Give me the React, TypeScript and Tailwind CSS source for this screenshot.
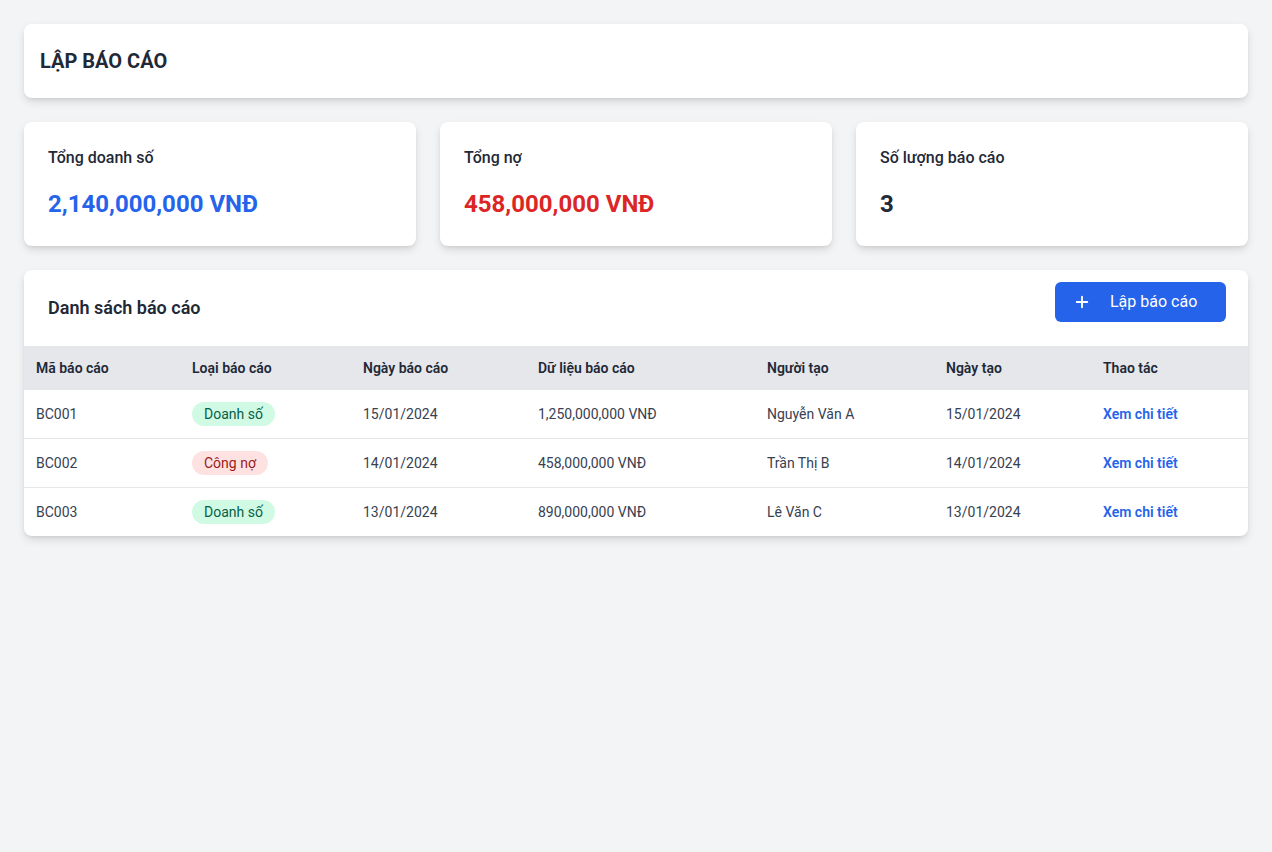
import { Plus } from "lucide-react";

const reports = [
  { id: "BC001", type: "Doanh số", date: "15/01/2024", data: "1,250,000,000 VNĐ", by: "Nguyễn Văn A", created: "15/01/2024" },
  { id: "BC002", type: "Công nợ", date: "14/01/2024", data: "458,000,000 VNĐ", by: "Trần Thị B", created: "14/01/2024" },
  { id: "BC003", type: "Doanh số", date: "13/01/2024", data: "890,000,000 VNĐ", by: "Lê Văn C", created: "13/01/2024" },
];

const card = "bg-white rounded-lg shadow-[0_4px_10px_-1px_rgba(0,0,0,0.14),0_2px_4px_-2px_rgba(0,0,0,0.1)]";

export default function App() {
  return (
    <div
      className="min-h-screen bg-[#f3f4f6] p-6 text-[#1f2937]"
      style={{ fontFamily: "Roboto, 'Noto Sans', sans-serif" }}
    >
      {/* Header */}
      <div className={`${card} px-4 py-[23px]`}>
        <h1 className="text-xl leading-7 font-bold text-[#1f2937]">LẬP BÁO CÁO</h1>
      </div>

      {/* Stats */}
      <div className="grid grid-cols-3 gap-6 mt-6">
        <div className={`${card} px-6 pt-[25px] pb-[26px]`}>
          <p className="text-base leading-[22px] font-medium">Tổng doanh số</p>
          <p className="mt-[19px] text-2xl leading-8 font-bold text-[#2563eb]">2,140,000,000 VNĐ</p>
        </div>
        <div className={`${card} px-6 pt-[25px] pb-[26px]`}>
          <p className="text-base leading-[22px] font-medium">Tổng nợ</p>
          <p className="mt-[19px] text-2xl leading-8 font-bold text-[#dc2626]">458,000,000 VNĐ</p>
        </div>
        <div className={`${card} px-6 pt-[25px] pb-[26px]`}>
          <p className="text-base leading-[22px] font-medium">Số lượng báo cáo</p>
          <p className="mt-[19px] text-2xl leading-8 font-bold">3</p>
        </div>
      </div>

      {/* Report list */}
      <div className={`${card} mt-6 overflow-hidden`}>
        <div className="flex items-start justify-between">
          <h2 className="px-6 py-6 text-lg leading-7 font-semibold">Danh sách báo cáo</h2>
          <button className="mt-3 mr-[22px] w-[171px] h-10 bg-[#2563eb] text-white rounded-md flex items-center pl-[18px]">
            <Plus className="w-[18px] h-[18px]" strokeWidth={2.5} />
            <span className="ml-[19px] text-base">Lập báo cáo</span>
          </button>
        </div>

        <table className="w-full table-fixed text-sm">
          <colgroup>
            <col className="w-[156px]" />
            <col className="w-[171px]" />
            <col className="w-[175px]" />
            <col className="w-[229px]" />
            <col className="w-[179px]" />
            <col className="w-[157px]" />
            <col />
          </colgroup>
          <thead className="bg-[#e5e7eb]">
            <tr className="h-11">
              {["Mã báo cáo", "Loại báo cáo", "Ngày báo cáo", "Dữ liệu báo cáo", "Người tạo", "Ngày tạo", "Thao tác"].map((h) => (
                <th key={h} className="px-3 pb-px text-left font-semibold text-[#1f2937]">{h}</th>
              ))}
            </tr>
          </thead>
          <tbody className="text-[#374151]">
            {reports.map((r, i) => (
              <tr key={r.id} className={i > 0 ? "h-[49px] border-t border-[#e5e7eb]" : "h-12"}>
                <td className="px-3">{r.id}</td>
                <td className="px-3">
                  {r.type === "Doanh số" ? (
                    <span className="inline-block px-3 leading-6 rounded-full bg-[#d1fae5] text-[#065f46]">{r.type}</span>
                  ) : (
                    <span className="inline-block px-3 leading-6 rounded-full bg-[#fee2e2] text-[#991b1b]">{r.type}</span>
                  )}
                </td>
                <td className="px-3">{r.date}</td>
                <td className="px-3">{r.data}</td>
                <td className="px-3">{r.by}</td>
                <td className="px-3">{r.created}</td>
                <td className="px-3">
                  <a className="text-[#2563eb] font-semibold cursor-pointer">Xem chi tiết</a>
                </td>
              </tr>
            ))}
          </tbody>
        </table>
      </div>
    </div>
  );
}
